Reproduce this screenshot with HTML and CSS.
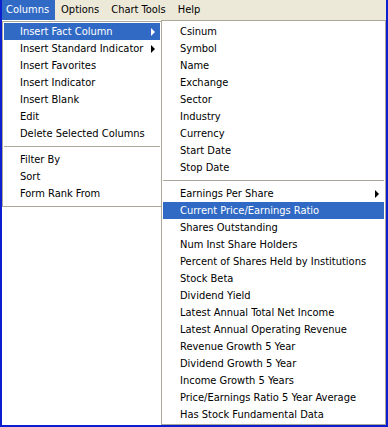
FILE: index.html
```html
<!DOCTYPE html>
<html lang="en">
<head>
    <meta charset="UTF-8">
    <title>Columns menu</title>
    <link rel="stylesheet" href="styles.css">
</head>
<body>
    <div class="window">
        <div class="menubar">
            <div class="menubar-item open">Columns</div>
            <div class="menubar-item">Options</div>
            <div class="menubar-item">Chart Tools</div>
            <div class="menubar-item">Help</div>
        </div>
        <div class="content">
            <!-- main dropdown -->
            <div class="menu main-menu">
                <div class="item active has-sub">Insert Fact Column</div>
                <div class="item has-sub">Insert Standard Indicator</div>
                <div class="item">Insert Favorites</div>
                <div class="item">Insert Indicator</div>
                <div class="item">Insert Blank</div>
                <div class="item">Edit</div>
                <div class="item">Delete Selected Columns</div>
                <div class="separator"></div>
                <div class="item">Filter By</div>
                <div class="item">Sort</div>
                <div class="item">Form Rank From</div>
            </div>

            <!-- submenu -->
            <div class="menu sub-menu">
                <div class="item">Csinum</div>
                <div class="item">Symbol</div>
                <div class="item">Name</div>
                <div class="item">Exchange</div>
                <div class="item">Sector</div>
                <div class="item">Industry</div>
                <div class="item">Currency</div>
                <div class="item">Start Date</div>
                <div class="item">Stop Date</div>
                <div class="separator"></div>
                <div class="item has-sub">Earnings Per Share</div>
                <div class="item active">Current Price/Earnings Ratio</div>
                <div class="item">Shares Outstanding</div>
                <div class="item">Num Inst Share Holders</div>
                <div class="item">Percent of Shares Held by Institutions</div>
                <div class="item">Stock Beta</div>
                <div class="item">Dividend Yield</div>
                <div class="item">Latest Annual Total Net Income</div>
                <div class="item">Latest Annual Operating Revenue</div>
                <div class="item">Revenue Growth 5 Year</div>
                <div class="item">Dividend Growth 5 Year</div>
                <div class="item">Income Growth 5 Years</div>
                <div class="item">Price/Earnings Ratio 5 Year Average</div>
                <div class="item">Has Stock Fundamental Data</div>
            </div>
        </div>
    </div>
</body>
</html>
```

FILE: styles.css
```css
html, body {
    margin: 0;
    padding: 0;
    background-color: #ffffff;
}
body {
    font-family: "DejaVu Sans Condensed", "DejaVu Sans", sans-serif;
    font-size: 11px;
    color: #000000;
}
.window {
    width: 388px;
    height: 427px;
    box-sizing: border-box;
    border-left: 2px solid #0c1fd0;
    border-right: 2px solid #0c1fd0;
    border-bottom: 2px solid #0c1fd0;
    display: flex;
    flex-direction: column;
}
.menubar {
    display: flex;
    height: 20px;
    background-color: #ece9d8;
    flex-shrink: 0;
}
.menubar-item {
    padding: 0 6px;
    line-height: 19px;
}
.menubar-item.open {
    background-color: #316ac5;
    color: white;
    padding: 0 6px 0 4px;
}
.content {
    position: relative;
    flex: 1;
    background-color: #ffffff;
}
.menu {
    position: absolute;
    top: 0;
    background-color: #ffffff;
    border: 1px solid #aca899;
    box-sizing: border-box;
}
.main-menu {
    left: 0;
    top: 1px;
    width: 160px;
    padding: 1px 1px 4px 1px;
}
.sub-menu {
    left: 159px;
    width: 225px;
    height: 405px;
    padding: 2px 1px;
}
.item {
    position: relative;
    height: 17px;
    line-height: 17px;
    padding-left: 16px;
    white-space: nowrap;
}
.sub-menu .item {
    padding-left: 17px;
}
.item.active {
    background-color: #316ac5;
    color: white;
}
.item.has-sub::after {
    content: "";
    position: absolute;
    right: 5px;
    top: 5px;
    border-left: 4px solid #000000;
    border-top: 4px solid transparent;
    border-bottom: 4px solid transparent;
}
.item.active.has-sub::after {
    border-left-color: white;
}
.separator {
    height: 1px;
    background-color: #aca899;
    margin: 4px 0 4px 0;
}
```
